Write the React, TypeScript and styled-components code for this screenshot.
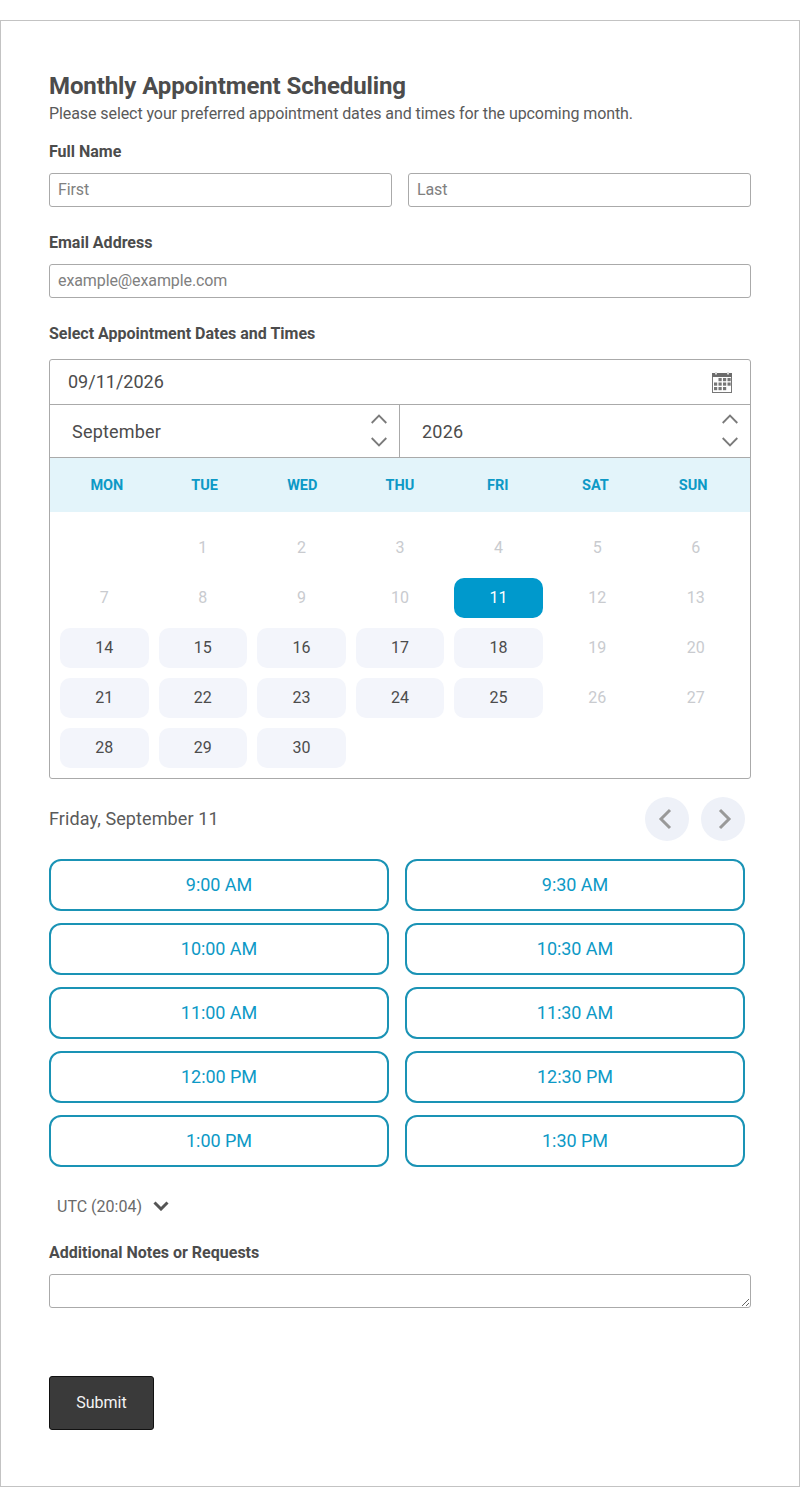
import React from "react";
import styled, { createGlobalStyle } from "styled-components";

const GlobalStyle = createGlobalStyle`
  * { box-sizing: border-box; }
  html, body { margin: 0; padding: 0; background: #fff; }
  body {
    font-family: Roboto, "Liberation Sans", sans-serif;
    color: #4c4c4c;
  }
`;

const Page = styled.div`
  padding-top: 20px;
  height: 1487px;
`;

const Card = styled.form`
  height: 1467px;
  border: 1px solid #c3c3c3;
  padding: 50px 48px 0 48px;
`;

const Title = styled.h1`
  margin: 0 0 1px;
  font-size: 24px;
  line-height: 30px;
  font-weight: 700;
  letter-spacing: -0.1px;
  color: #4c4c4c;
`;

const Subtitle = styled.p`
  margin: 0;
  font-size: 16px;
  line-height: 24px;
  letter-spacing: -0.08px;
  color: #5a5a5a;
`;

const Field = styled.div<{ $top: number }>`
  margin-top: ${(p) => p.$top}px;
`;

const Label = styled.label`
  display: block;
  font-size: 16px;
  line-height: 20px;
  font-weight: 700;
  color: #4c4c4c;
  margin-bottom: 11px;
`;

const NameRow = styled.div`
  display: grid;
  grid-template-columns: 343px 343px;
  gap: 16px;
`;

const Input = styled.input`
  display: block;
  width: 100%;
  height: 34px;
  border: 1px solid #aaa;
  border-radius: 3px;
  padding: 0 8px 2px;
  font: 400 16px Roboto, sans-serif;
  letter-spacing: -0.1px;
  color: #4c4c4c;
  outline: none;
  &::placeholder { color: #808080; opacity: 1; }
`;

const Calendar = styled.div`
  width: 702px;
  border: 1px solid #aaa;
  border-radius: 3px;
  margin-top: 15px;
`;

const DateRow = styled.div`
  height: 45px;
  display: flex;
  align-items: center;
  justify-content: space-between;
  padding: 0 18px;
  font-size: 18px;
  color: #4c4c4c;
  border-bottom: 1px solid #aaa;
`;

const DateText = styled.span`
  padding-bottom: 2px;
`;

const SelectRow = styled.div`
  height: 53px;
  display: grid;
  grid-template-columns: 350px 350px;
  border-bottom: 1px solid #aaa;
`;

const Select = styled.div<{ $divider?: boolean }>`
  display: flex;
  align-items: center;
  justify-content: space-between;
  padding: 0 12px 0 22px;
  font-size: 18px;
  letter-spacing: 0.2px;
  color: #4c4c4c;
  ${(p) => (p.$divider ? "border-right: 1px solid #aaa;" : "")}
`;

const Stepper = styled.div`
  display: flex;
  flex-direction: column;
  gap: 13px;
  padding-bottom: 2px;
`;

const WeekHeader = styled.div`
  height: 54px;
  padding: 0 8px;
  display: grid;
  grid-template-columns: repeat(7, 1fr);
  align-items: center;
  background: #e3f4fa;
`;

const WeekDay = styled.div`
  text-align: center;
  font-size: 14.5px;
  font-weight: 700;
  color: #0d99c6;
`;

const DayGrid = styled.div`
  display: grid;
  grid-template-columns: repeat(7, 1fr);
  grid-auto-rows: 40px;
  gap: 10px;
  padding: 16px 10px 10px;
`;

const Day = styled.div<{ $kind: "off" | "open" | "selected" | "empty" }>`
  display: flex;
  align-items: center;
  justify-content: center;
  padding-bottom: 2px;
  border-radius: 10px;
  font-size: 16px;
  background: ${(p) =>
    p.$kind === "open" ? "#f3f5fb" : p.$kind === "selected" ? "#0099cc" : "transparent"};
  color: ${(p) =>
    p.$kind === "off" ? "#c9cbcf" : p.$kind === "selected" ? "#fff" : "#4c4c4c"};
`;

const SlotHeader = styled.div`
  width: 696px;
  height: 44px;
  margin-top: 18px;
  display: flex;
  align-items: center;
  justify-content: space-between;
  font-size: 18px;
  letter-spacing: 0.1px;
  color: #5a5a5a;
`;

const SlotDate = styled.span`
  padding-bottom: 2px;
`;

const NavGroup = styled.div`
  display: flex;
  gap: 12px;
`;

const NavButton = styled.button`
  width: 44px;
  height: 44px;
  padding: 0;
  border: none;
  border-radius: 50%;
  background: #eef1f8;
  display: flex;
  align-items: center;
  justify-content: center;
`;

const SlotGrid = styled.div`
  width: 696px;
  margin-top: 18px;
  display: grid;
  grid-template-columns: 340px 340px;
  grid-auto-rows: 52px;
  gap: 12px 16px;
`;

const Slot = styled.button`
  border: 2px solid #1a93b5;
  border-radius: 12px;
  background: #fff;
  padding: 0 0 2px;
  font: 400 18px Roboto, sans-serif;
  letter-spacing: -0.05px;
  color: #0d99c6;
`;

const Timezone = styled.div`
  display: flex;
  align-items: center;
  gap: 11px;
  margin-top: 28px;
  padding-left: 8px;
  height: 22px;
  font-size: 16px;
  color: #6a6a6a;
`;

const Notes = styled.textarea`
  display: block;
  width: 100%;
  height: 34px;
  min-height: 34px;
  border: 1px solid #aaa;
  border-radius: 3px;
  padding: 6px 8px;
  font: 400 16px Roboto, sans-serif;
  outline: none;
`;

const Submit = styled.button`
  display: block;
  width: 105px;
  height: 54px;
  margin-top: 68px;
  border: 1px solid #111;
  border-radius: 3px;
  background: #3a3a3a;
  padding: 0 0 2px;
  color: #f4f4f4;
  font: 400 16px Roboto, sans-serif;
`;

function CalendarIcon() {
  const cells = [
    [6.5, 6], [11, 6], [15.5, 6],
    [2, 10.5], [6.5, 10.5], [11, 10.5], [15.5, 10.5],
    [2, 15], [6.5, 15], [11, 15],
  ];
  return (
    <svg width="20" height="21" viewBox="0 0 20 21">
      <rect x="0.5" y="1.5" width="19" height="19" fill="#fff" stroke="#777" />
      <rect x="0" y="1" width="20" height="4" fill="#6c6c6c" />
      <rect x="3" y="0" width="2" height="2.5" fill="#ddd" />
      <rect x="15" y="0" width="2" height="2.5" fill="#ddd" />
      {cells.map(([x, y]) => (
        <rect key={`${x}-${y}`} x={x} y={y} width="3.2" height="3.2" fill="#777" />
      ))}
    </svg>
  );
}

function Chevron({ up }: { up?: boolean }) {
  return (
    <svg width="16" height="10" viewBox="0 0 16 10" fill="none" stroke="#7a7a7a" strokeWidth="1.8">
      <path d={up ? "M0.7 9 L8 1.5 L15.3 9" : "M0.7 1 L8 8.5 L15.3 1"} />
    </svg>
  );
}

function NavArrow({ left }: { left?: boolean }) {
  return (
    <svg width="18" height="22" viewBox="0 0 18 22" fill="none" stroke="#999" strokeWidth="3">
      <path d={left ? "M12 2 L3 11 L12 20" : "M6 2 L15 11 L6 20"} />
    </svg>
  );
}

const weekDays = ["MON", "TUE", "WED", "THU", "FRI", "SAT", "SUN"];
const openDays = [14, 15, 16, 17, 18, 21, 22, 23, 24, 25, 28, 29, 30];
const slots = [
  "9:00 AM", "9:30 AM", "10:00 AM", "10:30 AM", "11:00 AM",
  "11:30 AM", "12:00 PM", "12:30 PM", "1:00 PM", "1:30 PM",
];

function dayKind(day: number) {
  if (day === 11) return "selected";
  return openDays.includes(day) ? "open" : "off";
}

export default function App() {
  return (
    <Page>
      <GlobalStyle />
      <Card>
        <Title>Monthly Appointment Scheduling</Title>
        <Subtitle>Please select your preferred appointment dates and times for the upcoming month.</Subtitle>

        <Field $top={16}>
          <Label>Full Name</Label>
          <NameRow>
            <Input placeholder="First" />
            <Input placeholder="Last" />
          </NameRow>
        </Field>

        <Field $top={26}>
          <Label>Email Address</Label>
          <Input placeholder="example@example.com" />
        </Field>

        <Field $top={26}>
          <Label>Select Appointment Dates and Times</Label>
          <Calendar>
            <DateRow>
              <DateText>09/11/2026</DateText>
              <CalendarIcon />
            </DateRow>
            <SelectRow>
              <Select $divider>
                September
                <Stepper><Chevron up /><Chevron /></Stepper>
              </Select>
              <Select>
                2026
                <Stepper><Chevron up /><Chevron /></Stepper>
              </Select>
            </SelectRow>
            <WeekHeader>
              {weekDays.map((d) => <WeekDay key={d}>{d}</WeekDay>)}
            </WeekHeader>
            <DayGrid>
              <Day $kind="empty" />
              {Array.from({ length: 30 }, (_, i) => i + 1).map((d) => (
                <Day key={d} $kind={dayKind(d)}>{d}</Day>
              ))}
            </DayGrid>
          </Calendar>
        </Field>

        <SlotHeader>
          <SlotDate>Friday, September 11</SlotDate>
          <NavGroup>
            <NavButton type="button"><NavArrow left /></NavButton>
            <NavButton type="button"><NavArrow /></NavButton>
          </NavGroup>
        </SlotHeader>

        <SlotGrid>
          {slots.map((s) => <Slot type="button" key={s}>{s}</Slot>)}
        </SlotGrid>

        <Timezone>
          UTC (20:04)
          <svg width="16" height="10" viewBox="0 0 16 10" fill="none" stroke="#555" strokeWidth="3">
            <path d="M1.5 1.5 L8 8 L14.5 1.5" />
          </svg>
        </Timezone>

        <Field $top={26}>
          <Label>Additional Notes or Requests</Label>
          <Notes />
        </Field>

        <Submit type="button">Submit</Submit>
      </Card>
    </Page>
  );
}
